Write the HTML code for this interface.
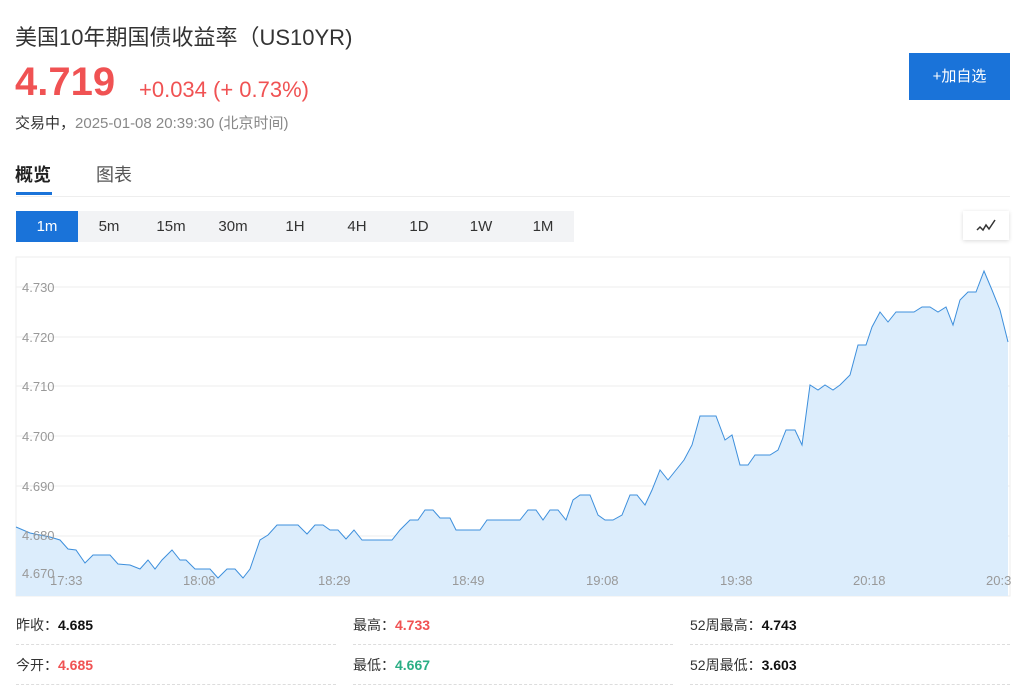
<!DOCTYPE html>
<html><head><meta charset="utf-8"><style>
body{margin:0;width:1030px;height:699px;background:#fff;font-family:"Liberation Sans","Noto Sans CJK SC",sans-serif;position:relative;overflow:hidden;color:#333}
.a{position:absolute;white-space:nowrap}
.pb{position:absolute;top:211px;height:31px;width:62px;background:#f2f3f5;text-align:center;line-height:31px;font-size:15px;color:#333}
.lab{font-size:14px;color:#333}
.v{font-weight:bold;font-size:14px}
.dl{position:absolute;height:0;border-top:1px dashed #ddd}
</style></head><body>
<div class="a" style="left:15px;top:20px;font-size:22px;color:#333">美国10年期国债收益率（US10YR)</div>
<div class="a" style="left:15px;top:60px;font-size:40px;font-weight:bold;color:#f05253">4.719</div>
<div class="a" style="left:139px;top:77px;font-size:22px;color:#f05253">+0.034 (+ 0.73%)</div>
<div class="a" style="left:15px;top:112px;font-size:15px;color:#333">交易中，<span style="color:#888">2025-01-08 20:39:30 (北京时间)</span></div>
<div class="a" style="left:909px;top:53px;width:101px;height:47px;background:#1a73d9;color:#fff;font-size:15px;text-align:center;line-height:47px">+加自选</div>
<div class="a" style="left:15px;top:161px;font-size:18px;font-weight:bold;color:#222">概览</div>
<div class="a" style="left:96px;top:161px;font-size:18px;color:#555">图表</div>
<div class="a" style="left:16px;top:192px;width:36px;height:3px;background:#1a73d9"></div>
<div class="a" style="left:16px;top:196px;width:994px;height:1px;background:#eee"></div>
<div class="pb" style="left:16px;background:#1a73d9;color:#fff">1m</div>
<div class="pb" style="left:78px">5m</div>
<div class="pb" style="left:140px">15m</div>
<div class="pb" style="left:202px">30m</div>
<div class="pb" style="left:264px">1H</div>
<div class="pb" style="left:326px">4H</div>
<div class="pb" style="left:388px">1D</div>
<div class="pb" style="left:450px">1W</div>
<div class="pb" style="left:512px">1M</div>
<div class="a" style="left:963px;top:211px;width:46px;height:29px;background:#fff;box-shadow:0 1px 4px rgba(0,0,0,.15)"><svg width="46" height="29"><path d="M14 19 L17 16 L20 19 L23 14 L26 18 L32 9" fill="none" stroke="#333" stroke-width="1.5"/></svg></div>
<svg class="a" style="left:0;top:0" width="1030" height="600">
<rect x="16" y="257" width="994" height="339" fill="none" stroke="#eee"/>
<g stroke="#eee"><line x1="16" x2="1010" y1="287" y2="287"/><line x1="16" x2="1010" y1="337" y2="337"/><line x1="16" x2="1010" y1="386" y2="386"/><line x1="16" x2="1010" y1="436" y2="436"/><line x1="16" x2="1010" y1="486" y2="486"/><line x1="16" x2="1010" y1="536" y2="536"/></g>
<path d="M16 527 L30 533 L40 535 L50 537 L60 540 L68 549 L76 550 L85 563 L93 555 L110 555 L118 564 L130 565 L140 569 L148 560 L155 569 L162 560 L172 550 L180 560 L186 560 L195 569 L210 569 L218 578 L227 569 L235 569 L243 578 L250 569 L260 540 L268 535 L277 525 L298 525 L307 534 L315 525 L323 525 L330 530 L338 530 L346 539 L354 530 L362 540 L392 540 L400 530 L410 520 L418 520 L425 510 L433 510 L440 518 L450 518 L456 530 L480 530 L487 520 L520 520 L528 510 L536 510 L543 520 L550 510 L558 510 L566 520 L573 500 L580 495 L590 495 L598 515 L605 520 L613 520 L622 515 L630 495 L637 495 L645 505 L652 490 L660 470 L668 480 L676 470 L684 460 L692 445 L700 416 L716 416 L725 440 L732 435 L740 465 L748 465 L755 455 L770 455 L778 450 L786 430 L795 430 L802 445 L810 385 L818 390 L825 385 L833 390 L840 385 L850 375 L858 345 L866 345 L872 327 L880 312 L888 322 L896 312 L914 312 L922 307 L930 307 L938 312 L946 307 L953 325 L960 300 L968 292 L976 292 L984 271 L992 290 L1000 310 L1008 342 L1008 596 L16 596 Z" fill="#dcedfc"/>
<path d="M16 527 L30 533 L40 535 L50 537 L60 540 L68 549 L76 550 L85 563 L93 555 L110 555 L118 564 L130 565 L140 569 L148 560 L155 569 L162 560 L172 550 L180 560 L186 560 L195 569 L210 569 L218 578 L227 569 L235 569 L243 578 L250 569 L260 540 L268 535 L277 525 L298 525 L307 534 L315 525 L323 525 L330 530 L338 530 L346 539 L354 530 L362 540 L392 540 L400 530 L410 520 L418 520 L425 510 L433 510 L440 518 L450 518 L456 530 L480 530 L487 520 L520 520 L528 510 L536 510 L543 520 L550 510 L558 510 L566 520 L573 500 L580 495 L590 495 L598 515 L605 520 L613 520 L622 515 L630 495 L637 495 L645 505 L652 490 L660 470 L668 480 L676 470 L684 460 L692 445 L700 416 L716 416 L725 440 L732 435 L740 465 L748 465 L755 455 L770 455 L778 450 L786 430 L795 430 L802 445 L810 385 L818 390 L825 385 L833 390 L840 385 L850 375 L858 345 L866 345 L872 327 L880 312 L888 322 L896 312 L914 312 L922 307 L930 307 L938 312 L946 307 L953 325 L960 300 L968 292 L976 292 L984 271 L992 290 L1000 310 L1008 342" fill="none" stroke="#3d8fdc" stroke-width="1"/>
<g font-size="13" fill="#999" font-family="Liberation Sans,sans-serif">
<text x="22" y="292">4.730</text><text x="22" y="342">4.720</text><text x="22" y="391">4.710</text><text x="22" y="441">4.700</text><text x="22" y="491">4.690</text><text x="22" y="540">4.680</text><text x="22" y="578">4.670</text>
<text x="50" y="585">17:33</text><text x="183" y="585">18:08</text><text x="318" y="585">18:29</text><text x="452" y="585">18:49</text><text x="586" y="585">19:08</text><text x="720" y="585">19:38</text><text x="853" y="585">20:18</text><text x="986" y="585">20:3</text>
</g></svg>
<div class="a lab" style="left:16px;top:615px">昨收：<span class="v" style="color:#111">4.685</span></div>
<div class="a lab" style="left:353px;top:615px">最高：<span class="v" style="color:#f05253">4.733</span></div>
<div class="a lab" style="left:690px;top:615px">52周最高：<span class="v" style="color:#111">4.743</span></div>
<div class="a lab" style="left:16px;top:655px">今开：<span class="v" style="color:#f05253">4.685</span></div>
<div class="a lab" style="left:353px;top:655px">最低：<span class="v" style="color:#2bae85">4.667</span></div>
<div class="a lab" style="left:690px;top:655px">52周最低：<span class="v" style="color:#111">3.603</span></div>
<div class="dl" style="left:16px;top:644px;width:320px"></div><div class="dl" style="left:353px;top:644px;width:320px"></div><div class="dl" style="left:690px;top:644px;width:320px"></div>
<div class="dl" style="left:16px;top:684px;width:320px"></div><div class="dl" style="left:353px;top:684px;width:320px"></div><div class="dl" style="left:690px;top:684px;width:320px"></div>
</body></html>
